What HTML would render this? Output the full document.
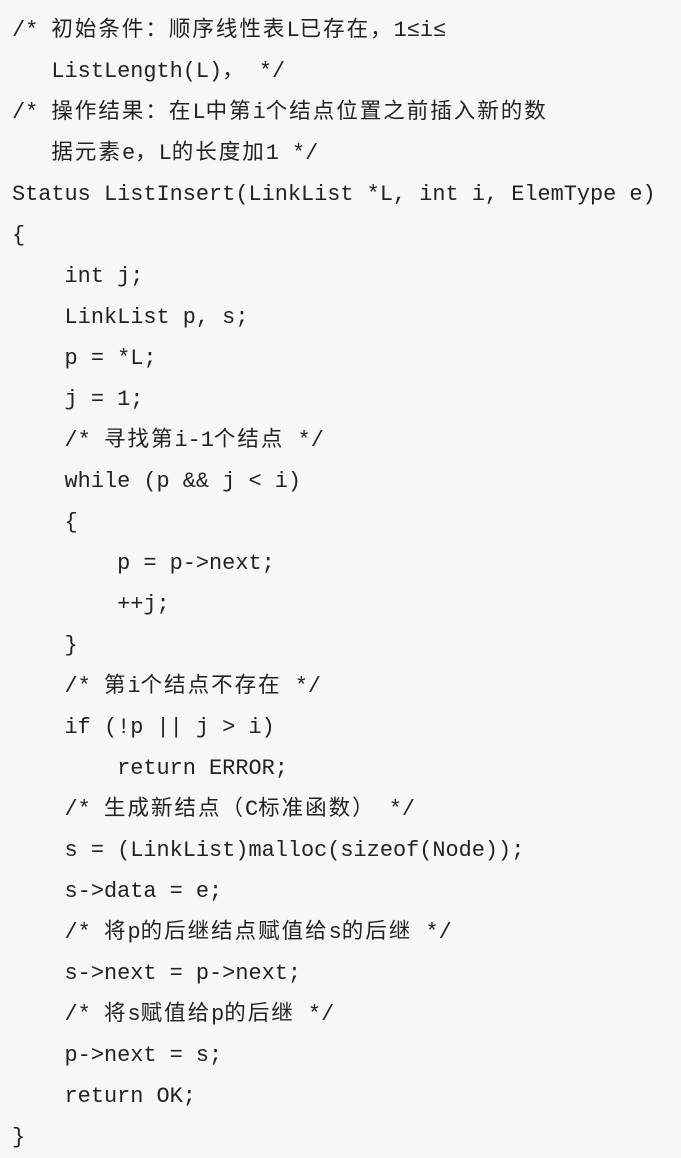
<!DOCTYPE html>
<html><head><meta charset="utf-8"><style>
html,body{margin:0;padding:0;background:#f7f7f7;}
body{width:681px;height:1157px;overflow:hidden;}
pre{margin:0;padding:10px 0 0 12px;font-family:"Liberation Mono","Noto Sans CJK SC",monospace;font-size:21.9px;line-height:41px;color:#222;white-space:pre;}
i{font-style:normal;letter-spacing:2px;font-family:"Noto Sans CJK SC",sans-serif;font-size:21.5px;line-height:0;}
</style></head><body><pre>/* <i>初始条件：顺序线性表</i>L<i>已存在，</i>1≤i≤
   ListLength(L)<i>，</i> */
/* <i>操作结果：在</i>L<i>中第</i>i<i>个结点位置之前插入新的数</i>
   <i>据元素</i>e<i>，</i>L<i>的长度加</i>1 */
Status ListInsert(LinkList *L, int i, ElemType e)
{
    int j;
    LinkList p, s;
    p = *L;
    j = 1;
    /* <i>寻找第</i>i-1<i>个结点</i> */
    while (p &amp;&amp; j &lt; i)
    {
        p = p-&gt;next;
        ++j;
    }
    /* <i>第</i>i<i>个结点不存在</i> */
    if (!p || j &gt; i)
        return ERROR;
    /* <i>生成新结点（</i>C<i>标准函数）</i> */
    s = (LinkList)malloc(sizeof(Node));
    s-&gt;data = e;
    /* <i>将</i>p<i>的后继结点赋值给</i>s<i>的后继</i> */
    s-&gt;next = p-&gt;next;
    /* <i>将</i>s<i>赋值给</i>p<i>的后继</i> */
    p-&gt;next = s;
    return OK;
}</pre></body></html>
